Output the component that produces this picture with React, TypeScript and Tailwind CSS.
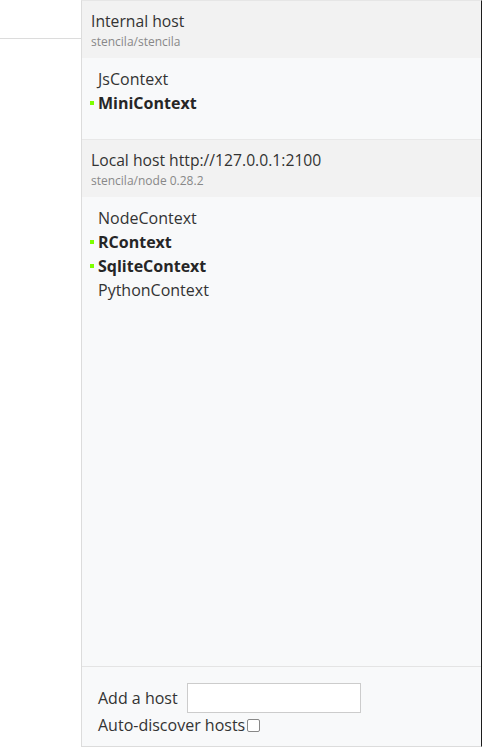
const hosts = [
  {
    name: "Internal host",
    meta: "stencila/stencila",
    contexts: [
      { name: "JsContext", active: false },
      { name: "MiniContext", active: true },
    ],
  },
  {
    name: "Local host http://127.0.0.1:2100",
    meta: "stencila/node 0.28.2",
    contexts: [
      { name: "NodeContext", active: false },
      { name: "RContext", active: true },
      { name: "SqliteContext", active: true },
      { name: "PythonContext", active: false },
    ],
  },
];

function ContextItem({ name, active }: { name: string; active: boolean }) {
  return (
    <div className="flex h-[24px] items-center gap-[4px]">
      <span
        className={
          active ? "h-[4px] w-[4px] bg-[#7dff00]" : "h-[4px] w-[4px]"
        }
      />
      <span className={active ? "font-bold text-[#262626]" : "text-[#333]"}>
        {name}
      </span>
    </div>
  );
}

export default function App() {
  return (
    <div
      className="flex h-[747px] w-[482px] bg-white text-[16px] text-[#333]"
      style={{ fontFamily: "'Open Sans', Lato, sans-serif" }}
    >
      <div className="w-[81px] shrink-0">
        <div className="h-[39px] border-b border-[#dcdcdc]" />
      </div>

      <div className="flex min-w-0 flex-1 flex-col border-x border-t border-b border-l-[#dcdcdc] border-r-[#1c1c1c] border-t-[#e6e6e6] border-b-[#dcdcdc] bg-[#f8f9fa]">
        {hosts.map((host, i) => (
          <div
            key={host.name}
            className={i > 0 ? "flex flex-1 flex-col border-t border-[#e8e8e8]" : "flex flex-col"}
          >
            <div className="bg-[#f2f2f2] px-[9px] pt-[10px] pb-[8px]">
              <div className="text-[15.7px] leading-[20px]">{host.name}</div>
              <div className="mt-[3px] text-[12px] leading-[16px] text-[#888]">
                {host.meta}
              </div>
            </div>
            <div className="pt-[9px] pb-[24px] pl-[8px]">
              {host.contexts.map((c) => (
                <ContextItem key={c.name} name={c.name} active={c.active} />
              ))}
            </div>
          </div>
        ))}

        <div className="border-t border-[#e4e4e4] px-[16px] pt-[16px] pb-[9px]">
          <div className="flex h-[30px] items-center gap-[9px]">
            <label htmlFor="host">Add a host</label>
            <input
              id="host"
              type="text"
              className="h-[30px] w-[174px] border border-[#cccccc] bg-white"
            />
          </div>
          <div className="flex h-[24px] items-center gap-[2px]">
            <label htmlFor="discover">Auto-discover hosts</label>
            <input
              id="discover"
              type="checkbox"
              className="h-[13px] w-[13px] appearance-none rounded-[2px] border border-[#888] bg-white"
            />
          </div>
        </div>
      </div>
    </div>
  );
}
